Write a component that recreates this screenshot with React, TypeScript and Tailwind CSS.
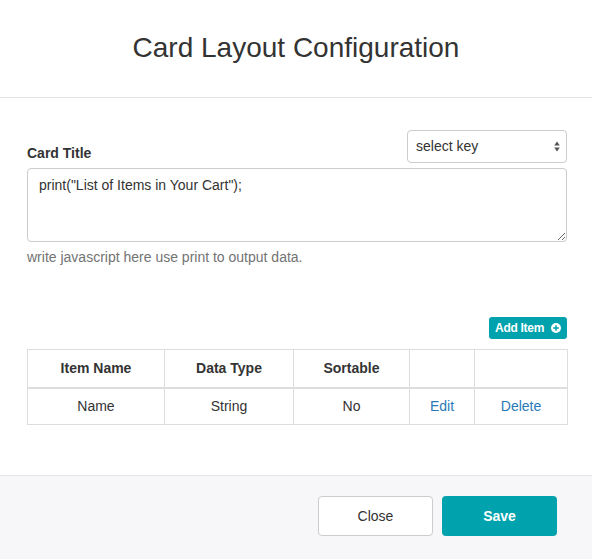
const font = { fontFamily: '"Liberation Sans", Arial, Helvetica, sans-serif' }

type Row = { name: string; type: string; sortable: string }

const rows: Row[] = [{ name: 'Name', type: 'String', sortable: 'No' }]

function PlusCircle() {
  return (
    <svg viewBox="0 0 16 16" className="h-[10px] w-[10px]" fill="currentColor">
      <circle cx="8" cy="8" r="8" />
      <path d="M6.8 3.5h2.4v3.3h3.3v2.4H9.2v3.3H6.8V9.2H3.5V6.8h3.3z" fill="#00a3ad" />
    </svg>
  )
}

function UpDown() {
  return (
    <svg viewBox="0 0 6 11" className="h-[11px] w-[6px]" fill="#555">
      <path d="M3 0.5L5.8 4.5H0.2z" />
      <path d="M3 10.5L0.2 6.5H5.8z" />
    </svg>
  )
}

export default function App() {
  return (
    <div className="w-[592px] h-[559px] flex flex-col bg-white text-[#333]" style={font}>
      {/* header */}
      <div className="h-[98px] shrink-0 flex items-center justify-center border-b border-[#e5e5e5]">
        <h1 className="text-[28px] font-light leading-none text-[#333] -mt-[2px]">Card Layout Configuration</h1>
      </div>

      {/* body */}
      <div className="flex-1 pl-[27px] pr-[25px] pt-[32px]">
        <div className="flex items-end justify-between">
          <label className="text-[14px] font-bold leading-[20px] text-[#333]">Card Title</label>
          <div className="flex h-[33px] w-[160px] items-center rounded-[4px] border border-[#ccc] bg-white pl-[8px] pr-[6px]">
            <span className="text-[14px] text-[#333]">select key</span>
            <span className="ml-auto flex">
              <UpDown />
            </span>
          </div>
        </div>
        <textarea
          className="mt-[5px] block h-[74px] w-full rounded-[4px] border border-[#ccc] px-[11px] py-[6px] text-[14px] leading-[20px] text-[#333] outline-none"
          style={font}
          defaultValue={'print("List of Items in Your Cart");'}
        />
        <p className="mt-[5px] text-[14px] leading-[20px] text-[#737373]">write javascript here use print to output data.</p>

        <div className="mt-[50px] flex justify-end">
          <button className="flex h-[22px] items-center gap-[7px] rounded-[3px] bg-[#00a3ad] pl-[6px] pr-[6px] text-[12px] font-bold tracking-[-0.3px] text-white">
            Add Item
            <PlusCircle />
          </button>
        </div>

        <table className="mt-[10px] w-full table-fixed border-collapse text-[14px]">
          <colgroup>
            <col className="w-[137px]" />
            <col className="w-[129px]" />
            <col className="w-[116px]" />
            <col className="w-[65px]" />
            <col className="w-[93px]" />
          </colgroup>
          <thead>
            <tr className="h-[38px] border-b-2 border-[#ddd]">
              <th className="border border-[#ddd] font-bold">Item Name</th>
              <th className="border border-[#ddd] font-bold">Data Type</th>
              <th className="border border-[#ddd] font-bold">Sortable</th>
              <th className="border border-[#ddd]"></th>
              <th className="border border-[#ddd]"></th>
            </tr>
          </thead>
          <tbody>
            {rows.map((r) => (
              <tr key={r.name} className="h-[37px] text-center">
                <td className="border border-[#ddd]">{r.name}</td>
                <td className="border border-[#ddd]">{r.type}</td>
                <td className="border border-[#ddd]">{r.sortable}</td>
                <td className="border border-[#ddd] text-[#2a7ab8]">Edit</td>
                <td className="border border-[#ddd] text-[#2a7ab8]">Delete</td>
              </tr>
            ))}
          </tbody>
        </table>
      </div>

      {/* footer */}
      <div className="h-[84px] shrink-0 flex items-center justify-end gap-[9px] border-t border-[#e5e5e5] bg-[#f7f7f9] pr-[35px] pb-[3px]">
        <button className="h-[40px] w-[115px] rounded-[4px] border border-[#ccc] bg-white text-[14px] text-[#333]">Close</button>
        <button className="h-[40px] w-[115px] rounded-[4px] bg-[#00a3ad] text-[14px] font-bold text-white">Save</button>
      </div>
    </div>
  )
}
